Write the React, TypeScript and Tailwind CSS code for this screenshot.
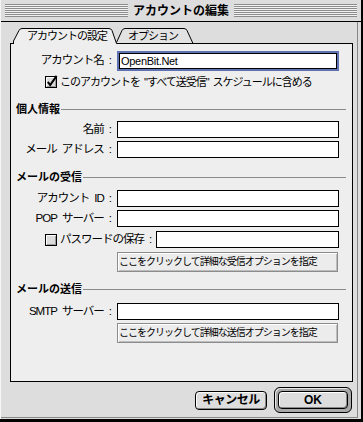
import React from "react";

function CheckBox({ checked }: { checked?: boolean }) {
  return (
    <svg width="13" height="14" viewBox="0 0 13 14" className="block shrink-0">
      <rect x="0.5" y="1.5" width="11" height="11" fill="#dcdcdc" stroke="#000" />
      <path d="M1.5 11 V2.5 H11" stroke="#fff" fill="none" />
      <path d="M2 11.5 H10.5 V3" stroke="#9a9a9a" fill="none" />
      {checked && (
        <path d="M2.8 6.8 L5.2 10 L11.6 0.9" stroke="#000" strokeWidth="2" fill="none" />
      )}
    </svg>
  );
}

function Spaced({ text }: { text: string }) {
  return (
    <>
      {text.split(" ").map((p, i) => (
        <span key={i} className={i ? "ml-[5px]" : ""}>
          {p}
        </span>
      ))}
    </>
  );
}

function FieldRow({ label, className }: { label: string; className: string }) {
  return (
    <div className={className}>
      <div className="w-[100px] text-right text-[11.5px] tracking-[-1px] leading-none whitespace-nowrap">
        <Spaced text={label} />
        <span className="ml-[5px]">:</span>
      </div>
      <div className="ml-[6px] w-[222px] h-[17px] bg-white border border-black" />
    </div>
  );
}

function Heading({ text, className }: { text: string; className: string }) {
  return (
    <div className={className}>
      <span className="font-bold text-[11px] leading-none whitespace-nowrap">{text}</span>
      <div className="flex-1 h-px bg-[#8a8a8a] ml-[1px]" />
    </div>
  );
}

function BevelButton({ text, className }: { text: string; className: string }) {
  return (
    <div className={className}>
      <span className="pl-[1px] text-[10px] tracking-[-1px] leading-none whitespace-nowrap">{text}</span>
    </div>
  );
}

export default function App() {
  return (
    <div className="w-[363px] h-[422px] bg-black text-black font-['Liberation_Sans','Noto_Sans_CJK_JP',sans-serif] select-none">
      <div className="w-[361px] h-[419px] bg-[#dddddd] border-l border-l-[#f6f6f6] flex flex-col">
        {/* title bar */}
        <div className="h-[22px] shrink-0 border-b border-black flex items-center px-[4px]">
          <div className="flex-1 h-[13px] bg-[repeating-linear-gradient(to_bottom,#8c8c8c_0px,#8c8c8c_1px,#f2f2f2_1px,#f2f2f2_2px)]" />
          <div className="px-[5px] text-[12px] font-bold leading-none whitespace-nowrap">アカウントの編集</div>
          <div className="flex-1 h-[13px] bg-[repeating-linear-gradient(to_bottom,#8c8c8c_0px,#8c8c8c_1px,#f2f2f2_1px,#f2f2f2_2px)]" />
        </div>

        {/* body */}
        <div className="w-[357px] h-[396px] shrink-0 border-r border-b border-[#888888] flex flex-col">
          {/* tabs */}
          <div className="relative z-10 ml-[9px] mt-[6px] mb-[-1px] w-[200px] h-[16px] shrink-0">
            <svg width="200" height="16" viewBox="0 0 200 16" className="absolute left-0 top-0">
              <path d="M106,15 L112,2.5 Q113,0.5 115,0.5 L174,0.5 Q176,0.5 177,2.5 L183,15 Z" fill="#e2e2e2" />
              <path d="M106,15.5 L112,2.5 Q113,0.5 115,0.5 L174,0.5 Q176,0.5 177,2.5 L183,15.5" fill="none" stroke="#000" />
              <path d="M3,16 L3.5,12 L9,2.5 Q10,0.5 12,0.5 L99,0.5 Q101,0.5 102,2.5 L107,16 Z" fill="#eeeeee" />
              <path d="M3.5,16 L3.5,13 L9,2.5 Q10,0.5 12,0.5 L99,0.5 Q101,0.5 102,2.5 L106.5,15.5 L107,16" fill="none" stroke="#000" />
            </svg>
            <span className="absolute left-[17px] top-[1px] h-[14px] leading-[14px] text-[11px] tracking-[-1px] whitespace-nowrap">
              アカウントの設定
            </span>
            <span className="absolute left-[118px] top-[1px] h-[14px] leading-[14px] text-[11px] tracking-[-1px] whitespace-nowrap">
              オプション
            </span>
          </div>

          {/* panel */}
          <div className="ml-[9px] w-[343px] h-[339px] shrink-0 border border-black bg-[#eeeeee] flex flex-col">
            <div className="flex items-center h-[20px] mt-[7px]">
              <div className="w-[100px] text-right text-[11.5px] tracking-[-1px] leading-none whitespace-nowrap">
                アカウント名
                <span className="ml-[5px]">:</span>
              </div>
              <div className="ml-[6px] w-[222px] h-[20px] border-2 border-[#5f73b3]">
                <div className="h-full border border-black bg-white flex items-center pl-[1px] text-[11px] tracking-[-0.3px] leading-none">
                  OpenBit.Net
                </div>
              </div>
            </div>

            <div className="flex items-center h-[14px] mt-[4px] pl-[34px]">
              <CheckBox checked />
              <span className="ml-[2px] text-[11px] tracking-[-1px] leading-none whitespace-nowrap">
                このアカウントを<span className="ml-[4px]">"すべて送受信"</span>
                <span className="ml-[4px]">スケジュールに含める</span>
              </span>
            </div>

            <Heading text="個人情報" className="flex items-center h-[14px] mt-[13px] pl-[5px] pr-[6px]" />
            <FieldRow label="名前" className="flex items-center h-[17px] mt-[5px]" />
            <FieldRow label="メール アドレス" className="flex items-center h-[17px] mt-[3px]" />

            <Heading text="メールの受信" className="flex items-center h-[14px] mt-[12px] pl-[5px] pr-[6px]" />
            <FieldRow label="アカウント ID" className="flex items-center h-[17px] mt-[6px]" />
            <FieldRow label="POP サーバー" className="flex items-center h-[17px] mt-[3px]" />
            <div className="flex items-center h-[17px] mt-[4px] pl-[34px] pr-[13px]">
              <CheckBox />
              <span className="ml-[2px] text-[11.5px] tracking-[-1px] leading-none whitespace-nowrap">
                パスワードの保存<span className="ml-[5px]">:</span>
              </span>
              <div className="ml-auto w-[183px] h-[17px] bg-white border border-black" />
            </div>
            <BevelButton
              text="ここをクリックして詳細な受信オプションを指定"
              className="ml-[106px] mt-[4px] w-[221px] h-[20px] flex items-center bg-[#ececec] border border-[#8c8c8c] shadow-[inset_1px_1px_0_#ffffff,inset_-1px_-1px_0_#bdbdbd]"
            />

            <Heading text="メールの送信" className="flex items-center h-[14px] mt-[10px] pl-[5px] pr-[6px]" />
            <FieldRow label="SMTP サーバー" className="flex items-center h-[17px] mt-[7px]" />
            <BevelButton
              text="ここをクリックして詳細な送信オプションを指定"
              className="ml-[106px] mt-[3px] w-[221px] h-[20px] flex items-center bg-[#ececec] border border-[#8c8c8c] shadow-[inset_1px_1px_0_#ffffff,inset_-1px_-1px_0_#bdbdbd]"
            />
          </div>

          {/* buttons */}
          <div className="mt-[5px] h-[26px] shrink-0 flex items-center justify-end gap-[7px] pr-[5px]">
            <div className="w-[72px] h-[19px] rounded-[4px] border border-black bg-[#dddddd] shadow-[inset_1px_1px_0_#ffffff,inset_-1px_-1px_0_#888888] flex items-center justify-center text-[12px] font-bold tracking-[-0.5px] leading-none">
              キャンセル
            </div>
            <div className="w-[78px] h-[26px] rounded-[6px] border border-black bg-[#a8a8a8] shadow-[inset_1px_1px_0_#e8e8e8] p-[3px]">
              <div className="w-full h-full rounded-[4px] border border-black bg-[#dddddd] shadow-[inset_1px_1px_0_#ffffff,inset_-1px_-1px_0_#888888] flex items-center justify-center text-[12px] font-bold leading-none">
                OK
              </div>
            </div>
          </div>
        </div>
      </div>
    </div>
  );
}
